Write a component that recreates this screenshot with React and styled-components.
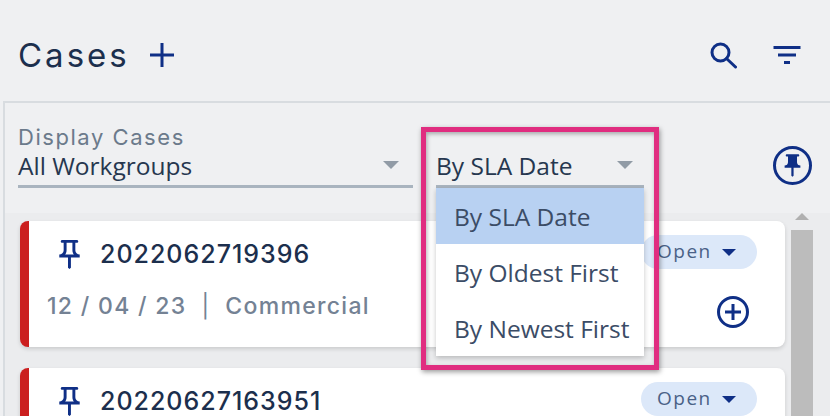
import React from 'react';
import styled, { createGlobalStyle } from 'styled-components';

const NAVY = '#0f2f86';

const PIN_SOLID = 'M16 9V4h1c.55 0 1-.45 1-1s-.45-1-1-1H7c-.55 0-1 .45-1 1s.45 1 1 1h1v5c0 1.66-1.34 3-3 3v2h5.97v7l1 1 1-1v-7H19v-2c-1.66 0-3-1.34-3-3z';
const PIN_OUTLINE = 'M14 4v5c0 1.12.37 2.16 1 3H9c.65-.86 1-1.9 1-3V4h4m3-2H7c-.55 0-1 .45-1 1s.45 1 1 1h1v5c0 1.66-1.34 3-3 3v2h5.97v7l1 1 1-1v-7H19v-2c-1.66 0-3-1.34-3-3V4h1c.55 0 1-.45 1-1s-.45-1-1-1z';

// the second card runs off the bottom of the window, its details never show
const cases = [
    { id: '2022062719396', date: '12 / 04 / 23', type: 'Commercial' },
    { id: '20220627163951' }
];

const sortOptions = ['By SLA Date', 'By Oldest First', 'By Newest First'];

const Icon = ({ d, size, ...rest }) => (
    <svg width={size} height={size} viewBox="0 0 24 24" fill={NAVY} {...rest}>
        <path d={d} />
    </svg>
);

const App = () => (
    <Page>
        <GlobalStyle />
        <Header>
            <Title>Cases</Title>
            <AddButton>
                <svg width="26" height="26" viewBox="0 0 26 26" stroke={NAVY} strokeWidth="3" fill="none">
                    <path d="M13 1v24M1 13h24" />
                </svg>
            </AddButton>
            <HeaderActions>
                <svg width="28" height="28" viewBox="0 0 28 28" fill="none" stroke={NAVY} strokeWidth="3">
                    <circle cx="11.5" cy="11.5" r="8.5" />
                    <path d="M17.5 17.5l9 8.5" strokeLinecap="round" />
                </svg>
                <Icon size={36} d="M10 18h4v-2h-4v2zM3 6v2h18V6H3zm3 7h12v-2H6v2z" />
            </HeaderActions>
        </Header>
        <Panel>
            <Filters>
                <WorkgroupField>
                    <FieldLabel>Display Cases</FieldLabel>
                    <SelectValue>
                        All Workgroups
                        <Caret />
                    </SelectValue>
                </WorkgroupField>
                <SortField>
                    <SortValue>
                        By SLA Date
                        <Caret />
                    </SortValue>
                    <Menu>
                        {sortOptions.map((o, i) => (
                            <MenuItem key={o} selected={i === 0}>{o}</MenuItem>
                        ))}
                    </Menu>
                    <Highlight />
                </SortField>
                <PinCircle>
                    <Icon size={27} d={PIN_SOLID} />
                </PinCircle>
            </Filters>
            <Body>
                <CardList>
                    {cases.map((c) => (
                        <Card key={c.id}>
                            <CardTop>
                                <Icon size={35} d={PIN_OUTLINE} />
                                <CaseNumber>{c.id}</CaseNumber>
                                <StatusPill>
                                    Open
                                    <PillCaret />
                                </StatusPill>
                            </CardTop>
                            {c.date && (
                                <CardBottom>
                                    <CardMeta>{c.date}<Separator>|</Separator>{c.type}</CardMeta>
                                    <svg width="34" height="34" viewBox="0 0 34 34" fill="none" stroke={NAVY} strokeWidth="3">
                                        <circle cx="17" cy="17" r="14.5" />
                                        <path d="M17 9v16M9 17h16" />
                                    </svg>
                                </CardBottom>
                            )}
                        </Card>
                    ))}
                </CardList>
                <Scrollbar>
                    <ScrollArrow />
                    <ScrollThumb />
                </Scrollbar>
            </Body>
        </Panel>
    </Page>
);

export default App;

const GlobalStyle = createGlobalStyle`
    html, body {
        margin: 0;
        padding: 0;
        background-color: #eff0f2;
    }
    * {
        box-sizing: border-box;
    }
`;

const Page = styled.div`
    width: 830px;
    height: 416px;
    overflow: hidden;
    background-color: #eff0f2;
    font-family: "Open Sans", sans-serif;
`;

const Header = styled.div`
    height: 101px;
    padding: 9px 25px 0 18px;
    display: flex;
    align-items: center;
`;

const Title = styled.div`
    font-family: Inter, sans-serif;
    font-size: 33px;
    letter-spacing: 3px;
    color: #1c2f4d;
`;

const AddButton = styled.div`
    margin-left: 19px;
    display: flex;
`;

const HeaderActions = styled.div`
    margin-left: auto;
    display: flex;
    align-items: center;
    gap: 32px;
`;

const Panel = styled.div`
    margin-left: 3px;
    border-top: 2px solid #d8dce0;
    border-left: 2px solid #d8dce0;
`;

const Filters = styled.div`
    height: 110px;
    padding: 23px 18px 0 13px;
    display: flex;
    align-items: flex-start;
`;

const WorkgroupField = styled.div`
    width: 395px;
`;

const FieldLabel = styled.div`
    font-family: Inter, sans-serif;
    font-size: 22px;
    line-height: 22px;
    letter-spacing: 1.55px;
    color: #6b7a8b;
`;

const SelectValue = styled.div`
    height: 40px;
    display: flex;
    align-items: center;
    justify-content: space-between;
    padding: 0 14px 3px 0;
    font-size: 24.5px;
    color: #26374f;
    border-bottom: 3px solid #a9b4bf;
`;

const Caret = styled.span`
    width: 0;
    height: 0;
    border-left: 8px solid transparent;
    border-right: 8px solid transparent;
    border-top: 8px solid #919ba6;
`;

const SortField = styled.div`
    position: relative;
    width: 208px;
    margin: 22px 0 0 23px;
`;

const SortValue = styled(SelectValue)`
    padding-right: 11px;
`;

const Menu = styled.div`
    position: absolute;
    top: 40px;
    left: 0;
    width: 100%;
    background-color: #fff;
    box-shadow: 0 2px 5px rgba(0, 0, 0, 0.22);
    z-index: 2;
`;

const MenuItem = styled.div`
    height: 56px;
    padding-left: 18px;
    display: flex;
    align-items: center;
    font-size: 24.5px;
    color: #3b4c66;
    background-color: ${(props) => (props.selected ? '#b8d1f2' : 'transparent')};
`;

const Highlight = styled.div`
    position: absolute;
    top: -21px;
    left: -15px;
    width: 238px;
    height: 243px;
    border: 5px solid #e02d80;
    box-shadow: 1px 2px 5px rgba(0, 0, 0, 0.4), inset 1px 2px 4px rgba(0, 0, 0, 0.3);
    z-index: 3;
`;

const PinCircle = styled.div`
    margin: 20px 0 0 auto;
    width: 39px;
    height: 39px;
    border-radius: 50%;
    border: 3px solid ${NAVY};
    display: flex;
    align-items: center;
    justify-content: center;
`;

const Body = styled.div`
    height: 320px;
    padding-left: 15px;
    display: flex;
    background-color: #ebecee;
`;

const CardList = styled.div`
    width: 765px;
    padding-top: 8px;
    display: flex;
    flex-direction: column;
    gap: 21px;
`;

const Card = styled.div`
    height: 126px;
    flex-shrink: 0;
    background-color: #fff;
    border-left: 9px solid #cb1f1f;
    border-radius: 8px;
    box-shadow: 0 2px 4px rgba(0, 0, 0, 0.14);
    padding: 15px 28px 0 18px;
`;

const CardTop = styled.div`
    display: flex;
    align-items: center;
    height: 36px;
    padding-left: 5px;
`;

const CaseNumber = styled.div`
    margin-left: 13px;
    font-family: Inter, sans-serif;
    font-weight: 500;
    font-size: 25px;
    letter-spacing: 1px;
    color: #1c2f4d;
`;

const StatusPill = styled.div`
    margin-left: auto;
    margin-top: -1px;
    align-self: flex-start;
    width: 116px;
    height: 34px;
    padding: 0 0 3px 16px;
    border-radius: 17px;
    background-color: #dce8f9;
    display: flex;
    align-items: center;
    font-size: 19px;
    letter-spacing: 1.5px;
    color: #4a6187;
`;

const PillCaret = styled.span`
    margin: 3px 0 0 10px;
    width: 0;
    height: 0;
    border-left: 7px solid transparent;
    border-right: 7px solid transparent;
    border-top: 7px solid ${NAVY};
`;

const CardBottom = styled.div`
    margin-top: 20px;
    display: flex;
    align-items: center;
    justify-content: space-between;
    padding-right: 7px;
`;

const CardMeta = styled.div`
    padding-bottom: 12px;
    font-family: Inter, sans-serif;
    font-weight: 500;
    font-size: 23px;
    letter-spacing: 1.3px;
    color: #748294;
`;

const Separator = styled.span`
    margin: 0 15px;
    font-weight: 400;
`;

const Scrollbar = styled.div`
    margin-left: 5px;
    width: 24px;
    display: flex;
    flex-direction: column;
    align-items: center;
`;

const ScrollArrow = styled.span`
    width: 0;
    height: 0;
    border-left: 7px solid transparent;
    border-right: 7px solid transparent;
    border-bottom: 7px solid #b0b0b0;
`;

const ScrollThumb = styled.div`
    margin-top: 10px;
    width: 22px;
    flex: 1;
    background-color: #bcbcbc;
`;
